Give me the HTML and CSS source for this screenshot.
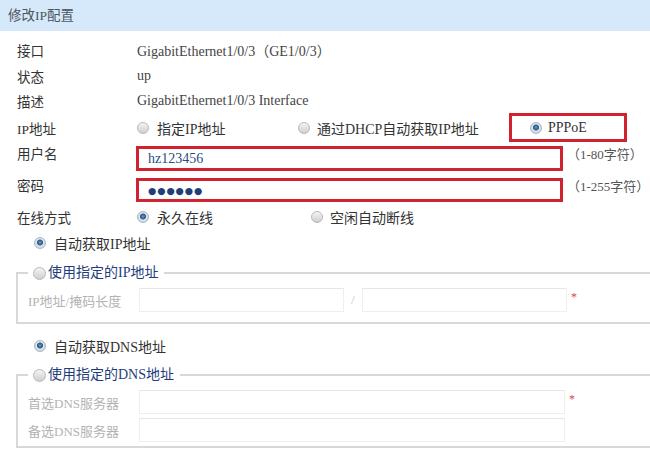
FILE: index.html
```html
<!DOCTYPE html>
<html lang="zh-CN">
<head>
<meta charset="utf-8">
<title>修改IP配置</title>
<link rel="stylesheet" href="styles.css">
</head>
<body>
<div class="title">修改IP配置</div>
<div class="form">
  <div class="row r1"><span class="lbl">接口</span><span class="val">GigabitEthernet1/0/3（GE1/0/3）</span></div>
  <div class="row r2"><span class="lbl">状态</span><span class="val">up</span></div>
  <div class="row r3"><span class="lbl">描述</span><span class="val">GigabitEthernet1/0/3 Interface</span></div>
  <div class="row r4">
    <span class="lbl">IP地址</span>
    <span class="opt opt-ip1"><i class="radio"></i>指定IP地址</span>
    <span class="opt opt-ip2"><i class="radio"></i>通过DHCP自动获取IP地址</span>
    <span class="opt pppoe"><i class="radio on"></i>PPPoE</span>
  </div>
  <div class="row r5">
    <span class="lbl">用户名</span>
    <span class="redbox user">hz123456</span>
    <span class="hint">（1-80字符）</span>
  </div>
  <div class="row r6">
    <span class="lbl">密码</span>
    <span class="redbox pass"><span class="dots">●●●●●●</span></span>
    <span class="hint">（1-255字符）</span>
  </div>
  <div class="row r7">
    <span class="lbl">在线方式</span>
    <span class="opt opt-on1"><i class="radio on"></i>永久在线</span>
    <span class="opt"><i class="radio"></i>空闲自动断线</span>
  </div>
  <div class="row auto"><span class="opt"><i class="radio on"></i>自动获取IP地址</span></div>
  <fieldset class="fs fs-ip">
    <legend class="legend"><i class="radio"></i>使用指定的IP地址</legend>
    <div class="fsrow">
      <span class="fslbl">IP地址/掩码长度</span>
      <span class="fsin half"></span>
      <span class="slash">/</span>
      <span class="fsin half"></span>
      <span class="req">*</span>
    </div>
  </fieldset>
  <div class="row auto dns"><span class="opt"><i class="radio on"></i>自动获取DNS地址</span></div>
  <fieldset class="fs fs-dns">
    <legend class="legend"><i class="radio"></i>使用指定的DNS地址</legend>
    <div class="fsrow">
      <span class="fslbl">首选DNS服务器</span>
      <span class="fsin full"></span>
      <span class="req">*</span>
    </div>
    <div class="fsrow">
      <span class="fslbl">备选DNS服务器</span>
      <span class="fsin full"></span>
    </div>
  </fieldset>
</div>
</body>
</html>
```
FILE: styles.css
```css
html, body {
  margin: 0;
  padding: 0;
  background: #fff;
  overflow: hidden;
}
body {
  font-family: "Liberation Serif", "Noto Sans CJK SC", serif;
  font-size: 13.5px;
  color: #333;
}
.title {
  height: 31px;
  line-height: 31px;
  padding-left: 8px;
  background: #d6e9fa;
  color: #4d5660;
  font-size: 13.5px;
}
.form {
  padding-top: 6px;
}
.row {
  display: flex;
  align-items: center;
  padding-left: 17px;
}
.lbl {
  width: 119px;
  flex: none;
}
.val {
  padding-left: 1px;
  color: #444;
  font-size: 14px;
}
.r1 { height: 26px; }
.r2 { height: 26px; }
.r3 { height: 24px; }
.r4 { height: 29px; }
.r5 { align-items: flex-start; padding-top: 4px; padding-bottom: 3px; }
.r6 { align-items: flex-start; padding-top: 4px; padding-bottom: 2px; }
.r5 .lbl, .r6 .lbl, .hint { line-height: 18px; }
.r7 { height: 26px; }
.opt {
  display: flex;
  align-items: center;
  gap: 7px;
  color: #333;
  font-size: 14px;
  flex: none;
}
.opt-ip1 { width: 162px; padding-left: 1px; gap: 8px; box-sizing: border-box; }
.opt-ip2 { width: 211px; }
.opt-on1 { width: 175px; padding-left: 1px; gap: 8px; box-sizing: border-box; }
.pppoe {
  width: 118px;
  height: 29px;
  box-sizing: border-box;
  border: 3px solid #d3222f;
  padding-left: 18px;
  gap: 6px;
}
.radio {
  display: inline-block;
  width: 12px;
  height: 12px;
  border-radius: 50%;
  box-sizing: border-box;
  border: 1px solid #b9b9b9;
  background: linear-gradient(#f4f4f4, #cfcfcf);
  flex: none;
}
.radio.on {
  border-color: #a9b8c6;
  background: radial-gradient(circle at 50% 45%, #6f97bb 0, #2d5a84 2.6px, #dfe7ee 3.4px, #c4d0da 6px);
}
.redbox {
  width: 427px;
  height: 25px;
  box-sizing: border-box;
  border: 3px solid #d3222f;
  display: flex;
  align-items: center;
  padding-left: 9px;
  flex: none;
}
.user { color: #2c4b82; font-size: 14px; }
.pass { height: 24px; }
.dots {
  font-family: "DejaVu Sans", sans-serif;
  font-size: 9.5px;
  letter-spacing: 0.9px;
  color: #1f3f78;
}
.hint {
  flex: none;
  white-space: nowrap;
  margin-left: 4px;
  color: #555;
  font-size: 13px;
}
.auto {
  height: 26px;
  padding-left: 34px;
}
.auto .opt { gap: 8px; }
.dns { margin-top: 9px; }
.fs {
  margin: 8px 0 0 16px;
  min-width: 0;
  border: 2px solid #d8d8d8;
  border-right: none;
  padding: 6px 0 10px 10px;
}
.fs-dns { margin-top: 7px; padding-bottom: 4px; }
.legend {
  display: flex;
  align-items: center;
  gap: 2px;
  padding: 0 6px 0 5px;
  line-height: 18px;
  color: #1f3d7a;
  font-size: 14px;
}
.legend .radio {
  width: 13px;
  height: 13px;
}
.fsrow {
  display: flex;
  align-items: center;
  height: 24px;
}
.fsrow + .fsrow { margin-top: 4px; }
.fslbl {
  width: 111px;
  flex: none;
  color: #b3b3b3;
  font-size: 13px;
}
.fsin {
  height: 24px;
  box-sizing: border-box;
  border: 1px solid #efefef;
  border-top-color: #e6e6e6;
  background: #fff;
  flex: none;
}
.half { width: 205px; }
.full { width: 426px; }
.slash {
  width: 18px;
  text-align: center;
  color: #c8c8c8;
  flex: none;
}
.req {
  margin-left: 4px;
  color: #d9434f;
  font-size: 12px;
  align-self: flex-start;
  line-height: 18px;
}
```
